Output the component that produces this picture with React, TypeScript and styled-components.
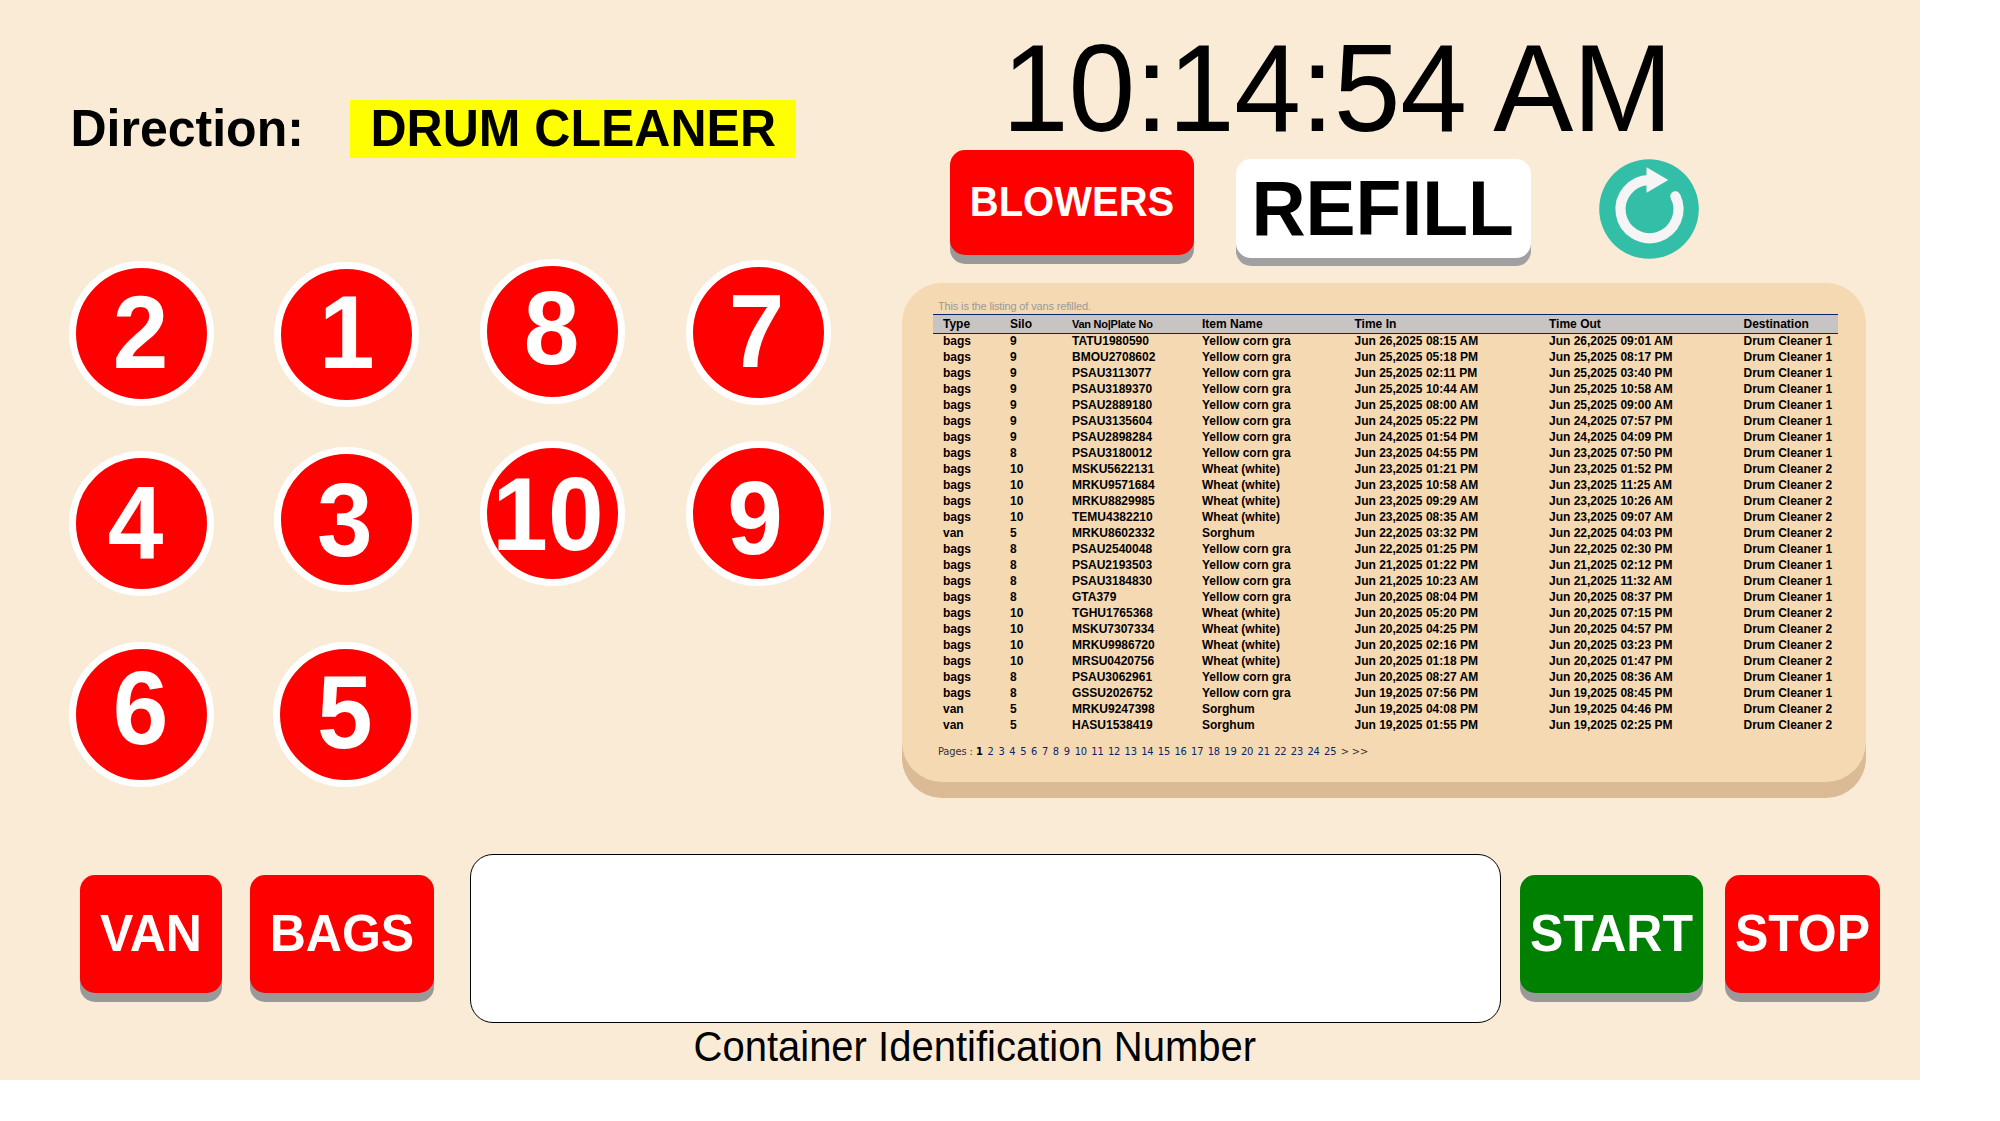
import React from "react";
import styled, { createGlobalStyle } from "styled-components";

const GlobalStyle = createGlobalStyle`
  * { box-sizing: border-box; }
  body { margin: 0; background: #fff; font-family: "Liberation Sans", Arial, sans-serif; color: #000; }
`;

const Screen = styled.main`
  width: 1920px;
  height: 1080px;
  background: #faebd7;
  display: flex;
  flex-direction: column;
`;

const Upper = styled.div`
  display: flex;
  height: 854px;
`;

const Left = styled.section`
  width: 902px;
  padding-top: 100px;
`;

const Right = styled.section`
  flex: 1;
  display: flex;
  flex-direction: column;
`;

/* Keeps cap height tall without widening the letters. */
const Glyphs = styled.span`
  display: block;
  white-space: nowrap;
  transform: scaleY(1.04);
  transform-origin: 50% 79%;
`;

const DirectionRow = styled.div`
  display: flex;
  padding-left: 70.5px;
  height: 58px;
  font-size: 50px;
  font-weight: 700;
  line-height: 58px;
`;

const DirectionLabel = styled.div`
  width: 279.5px;
`;

const DirectionValue = styled.div`
  width: 446px;
  padding-left: 20.5px;
  background: #ff0;
`;

const Silos = styled.div`
  display: flex;
  padding: 101px 0 0 68.6px;
  gap: 60.7px;
`;

const SiloColumn = styled.div<{ $top: number }>`
  width: 145px;
  display: flex;
  flex-direction: column;
  padding-top: ${(p) => p.$top}px;
`;

const Silo = styled.button<{ $gap?: number; $shift?: number }>`
  width: 145px;
  height: 145px;
  flex: none;
  display: flex;
  align-items: center;
  justify-content: center;
  padding: 0;
  margin: ${(p) => p.$gap ?? 0}px 0 0 ${(p) => p.$shift ?? 0}px;
  border: 7px solid #fff;
  border-radius: 50%;
  background: #f00;
  color: #fff;
  font: 700 100px/112px "Liberation Sans", Arial, sans-serif;
`;

const SiloNumber = styled(Glyphs)<{ $dx: number; $dy: number }>`
  margin: ${(p) => p.$dy * 2}px 0 0 ${(p) => p.$dx * 2}px;
`;

const Clock = styled.div`
  padding: 20px 0 0 100px;
  height: 150px;
  font-size: 120px;
  line-height: 138px;
  letter-spacing: -0.3px;
`;

const Controls = styled.div`
  display: flex;
  align-items: flex-start;
  height: 133px;
  padding-left: 48px;
`;

const PushButton = styled.button<{
  $w: number;
  $h: number;
  $size: number;
  $bg?: string;
  $fg?: string;
  $shadow?: string;
  $padRight?: number;
}>`
  width: ${(p) => p.$w}px;
  height: ${(p) => p.$h}px;
  flex: none;
  display: flex;
  align-items: center;
  justify-content: center;
  padding: 0 ${(p) => p.$padRight ?? 0}px 0 0;
  border: 0;
  border-radius: 15px;
  background: ${(p) => p.$bg ?? "#f00"};
  color: ${(p) => p.$fg ?? "#fff"};
  box-shadow: 0 ${(p) => p.$shadow ?? "9px #999"};
  font: 700 ${(p) => p.$size}px "Liberation Sans", Arial, sans-serif;
`;

const RefillSlot = styled.div`
  padding: 9px 68px 0 42.4px;
`;

const ReloadSlot = styled.div`
  padding-top: 9.4px;
  svg { display: block; }
`;

const Panel = styled.div`
  width: 964px;
  height: 499px;
  border-radius: 40px;
  background: #f5d9b3;
  box-shadow: 0 16px #dabb95;
  padding: 16px 28px 0 31px;
`;

const Caption = styled.div`
  height: 15px;
  line-height: 14px;
  padding-left: 5px;
  font-size: 11px;
  letter-spacing: -0.15px;
  color: #999;
`;

const columns = `
  display: grid;
  grid-template-columns: 67px 62px 130px 152.5px 194.5px 194.5px 95px;
  padding-left: 10px;
  font-size: 12px;
  font-weight: 700;
  white-space: nowrap;
`;

const HeadRow = styled.div`
  ${columns}
  height: 20px;
  line-height: 18px;
  border-top: 1px solid #0a246a;
  border-bottom: 1px solid #0a246a;
  background: #c9c4c4;
`;

const HeadCell = styled.span<{ $small?: boolean }>`
  font-size: ${(p) => (p.$small ? 11 : 12)}px;
  letter-spacing: ${(p) => (p.$small ? -0.25 : 0)}px;
`;

const Row = styled.div`
  ${columns}
  height: 16px;
  line-height: 14px;
`;

const Pages = styled.div`
  display: flex;
  padding: 11px 0 0 5px;
  font: 11px/14px Tahoma, "DejaVu Sans Condensed", "DejaVu Sans", sans-serif;
  letter-spacing: -0.1px;
  color: #333;
`;

const PagesLabel = styled.span`
  width: 38px;
`;

const Page = styled.span<{ $w: number; $current?: boolean }>`
  width: ${(p) => p.$w}px;
  color: ${(p) => (p.$current ? "#000" : "#0a246a")};
  font-weight: ${(p) => (p.$current ? 700 : 400)};
`;

const Arrow = styled.span`
  width: 11.2px;
`;

const Footer = styled.div`
  display: flex;
  align-items: flex-start;
  padding-left: 80px;
`;

const ActionPair = styled.div<{ $gap: number }>`
  display: flex;
  gap: ${(p) => p.$gap}px;
  padding-top: 21px;
`;

const Container = styled.div`
  width: 1031px;
  margin: 0 19.5px 0 35.5px;
`;

const ContainerInput = styled.input`
  display: block;
  width: 1031px;
  height: 169px;
  border: 1px solid #000;
  border-radius: 23px;
  background: #fff;
`;

const ContainerLabel = styled.div`
  padding: 1px 0 0 224px;
  font-size: 40px;
  line-height: 46px;
`;

type SiloSpec = { n: number; dx: number; dy: number; gap?: number; shift?: number };
const siloColumns: { top: number; silos: SiloSpec[] }[] = [
  {
    top: 2,
    silos: [
      { n: 2, dx: -0.5, dy: -1 },
      { n: 4, dx: -5.5, dy: 0.5, gap: 45 },
      { n: 6, dx: -0.5, dy: -5.5, gap: 46 },
    ],
  },
  {
    top: 3,
    silos: [
      { n: 1, dx: 0, dy: -1.5 },
      { n: 3, dx: -2, dy: 1.5, gap: 40 },
      { n: 5, dx: -0.5, dy: -1.5, gap: 50, shift: -1.5 },
    ],
  },
  {
    top: 0,
    silos: [
      { n: 8, dx: -1, dy: -2.5 },
      { n: 10, dx: -4.5, dy: 1.5, gap: 37 },
    ],
  },
  {
    top: 1,
    silos: [
      { n: 7, dx: -1.5, dy: -0.5 },
      { n: 9, dx: -3, dy: 5, gap: 36 },
    ],
  },
];

const corn = "Yellow corn gra";
const wheat = "Wheat (white)";
const rows: string[][] = [
  ["bags", "9", "TATU1980590", corn, "26,2025 08:15 AM", "26,2025 09:01 AM", "1"],
  ["bags", "9", "BMOU2708602", corn, "25,2025 05:18 PM", "25,2025 08:17 PM", "1"],
  ["bags", "9", "PSAU3113077", corn, "25,2025 02:11 PM", "25,2025 03:40 PM", "1"],
  ["bags", "9", "PSAU3189370", corn, "25,2025 10:44 AM", "25,2025 10:58 AM", "1"],
  ["bags", "9", "PSAU2889180", corn, "25,2025 08:00 AM", "25,2025 09:00 AM", "1"],
  ["bags", "9", "PSAU3135604", corn, "24,2025 05:22 PM", "24,2025 07:57 PM", "1"],
  ["bags", "9", "PSAU2898284", corn, "24,2025 01:54 PM", "24,2025 04:09 PM", "1"],
  ["bags", "8", "PSAU3180012", corn, "23,2025 04:55 PM", "23,2025 07:50 PM", "1"],
  ["bags", "10", "MSKU5622131", wheat, "23,2025 01:21 PM", "23,2025 01:52 PM", "2"],
  ["bags", "10", "MRKU9571684", wheat, "23,2025 10:58 AM", "23,2025 11:25 AM", "2"],
  ["bags", "10", "MRKU8829985", wheat, "23,2025 09:29 AM", "23,2025 10:26 AM", "2"],
  ["bags", "10", "TEMU4382210", wheat, "23,2025 08:35 AM", "23,2025 09:07 AM", "2"],
  ["van", "5", "MRKU8602332", "Sorghum", "22,2025 03:32 PM", "22,2025 04:03 PM", "2"],
  ["bags", "8", "PSAU2540048", corn, "22,2025 01:25 PM", "22,2025 02:30 PM", "1"],
  ["bags", "8", "PSAU2193503", corn, "21,2025 01:22 PM", "21,2025 02:12 PM", "1"],
  ["bags", "8", "PSAU3184830", corn, "21,2025 10:23 AM", "21,2025 11:32 AM", "1"],
  ["bags", "8", "GTA379", corn, "20,2025 08:04 PM", "20,2025 08:37 PM", "1"],
  ["bags", "10", "TGHU1765368", wheat, "20,2025 05:20 PM", "20,2025 07:15 PM", "2"],
  ["bags", "10", "MSKU7307334", wheat, "20,2025 04:25 PM", "20,2025 04:57 PM", "2"],
  ["bags", "10", "MRKU9986720", wheat, "20,2025 02:16 PM", "20,2025 03:23 PM", "2"],
  ["bags", "10", "MRSU0420756", wheat, "20,2025 01:18 PM", "20,2025 01:47 PM", "2"],
  ["bags", "8", "PSAU3062961", corn, "20,2025 08:27 AM", "20,2025 08:36 AM", "1"],
  ["bags", "8", "GSSU2026752", corn, "19,2025 07:56 PM", "19,2025 08:45 PM", "1"],
  ["van", "5", "MRKU9247398", "Sorghum", "19,2025 04:08 PM", "19,2025 04:46 PM", "2"],
  ["van", "5", "HASU1538419", "Sorghum", "19,2025 01:55 PM", "19,2025 02:25 PM", "2"],
];
const headings = ["Type", "Silo", "Van No|Plate No", "Item Name", "Time In", "Time Out", "Destination"];

function ReloadIcon() {
  return (
    <svg width="100" height="100" viewBox="0 0 100 100">
      <circle cx="50" cy="50" r="49.8" fill="#33bea8" />
      <path d="M50 21.2 A29 29 0 1 0 76.5 37.4" fill="none" stroke="#f5f5f5" strokeWidth="10.2" />
      <circle cx="76.3" cy="37.2" r="5" fill="#f5f5f5" />
      <path d="M47.5 8.3 L69.3 21 L47.5 33.7 Z" fill="#f5f5f5" />
    </svg>
  );
}

export default function App() {
  return (
    <>
      <GlobalStyle />
      <Screen>
        <Upper>
          <Left>
            <DirectionRow>
              <DirectionLabel><Glyphs>Direction:</Glyphs></DirectionLabel>
              <DirectionValue><Glyphs>DRUM CLEANER</Glyphs></DirectionValue>
            </DirectionRow>
            <Silos>
              {siloColumns.map((c, i) => (
                <SiloColumn key={i} $top={c.top}>
                  {c.silos.map((s) => (
                    <Silo key={s.n} $gap={s.gap} $shift={s.shift}>
                      <SiloNumber $dx={s.dx} $dy={s.dy}>{s.n}</SiloNumber>
                    </Silo>
                  ))}
                </SiloColumn>
              ))}
            </Silos>
          </Left>
          <Right>
            <Clock><Glyphs>10:14:54 AM</Glyphs></Clock>
            <Controls>
              <PushButton $w={244} $h={105} $size={40}><Glyphs>BLOWERS</Glyphs></PushButton>
              <RefillSlot>
                <PushButton $w={294.5} $h={99} $size={75} $bg="#fff" $fg="#000" $shadow="8px #a0a0a0" $padRight={2}>
                  <Glyphs>REFILL</Glyphs>
                </PushButton>
              </RefillSlot>
              <ReloadSlot><ReloadIcon /></ReloadSlot>
            </Controls>
            <Panel>
              <Caption>This is the listing of vans refilled.</Caption>
              <HeadRow>
                {headings.map((h, i) => <HeadCell key={h} $small={i === 2}>{h}</HeadCell>)}
              </HeadRow>
              {rows.map((r) => (
                <Row key={r[2]}>
                  <span>{r[0]}</span>
                  <span>{r[1]}</span>
                  <span>{r[2]}</span>
                  <span>{r[3]}</span>
                  <span>{`Jun ${r[4]}`}</span>
                  <span>{`Jun ${r[5]}`}</span>
                  <span>{`Drum Cleaner ${r[6]}`}</span>
                </Row>
              ))}
              <Pages>
                <PagesLabel>Pages :</PagesLabel>
                {Array.from({ length: 25 }, (_, i) => (
                  <Page key={i} $current={i === 0} $w={i === 0 ? 11.5 : i < 9 ? 10.9 : 16.63}>{i + 1}</Page>
                ))}
                <Arrow>&gt;</Arrow>
                <Arrow>&gt;&gt;</Arrow>
              </Pages>
            </Panel>
          </Right>
        </Upper>
        <Footer>
          <ActionPair $gap={28}>
            <PushButton $w={142} $h={118} $size={50}><Glyphs>VAN</Glyphs></PushButton>
            <PushButton $w={184} $h={118} $size={50}><Glyphs>BAGS</Glyphs></PushButton>
          </ActionPair>
          <Container>
            <ContainerInput />
            <ContainerLabel><Glyphs>Container Identification Number</Glyphs></ContainerLabel>
          </Container>
          <ActionPair $gap={22}>
            <PushButton $w={183} $h={118} $size={50} $bg="#008000"><Glyphs>START</Glyphs></PushButton>
            <PushButton $w={155} $h={118} $size={50}><Glyphs>STOP</Glyphs></PushButton>
          </ActionPair>
        </Footer>
      </Screen>
    </>
  );
}
